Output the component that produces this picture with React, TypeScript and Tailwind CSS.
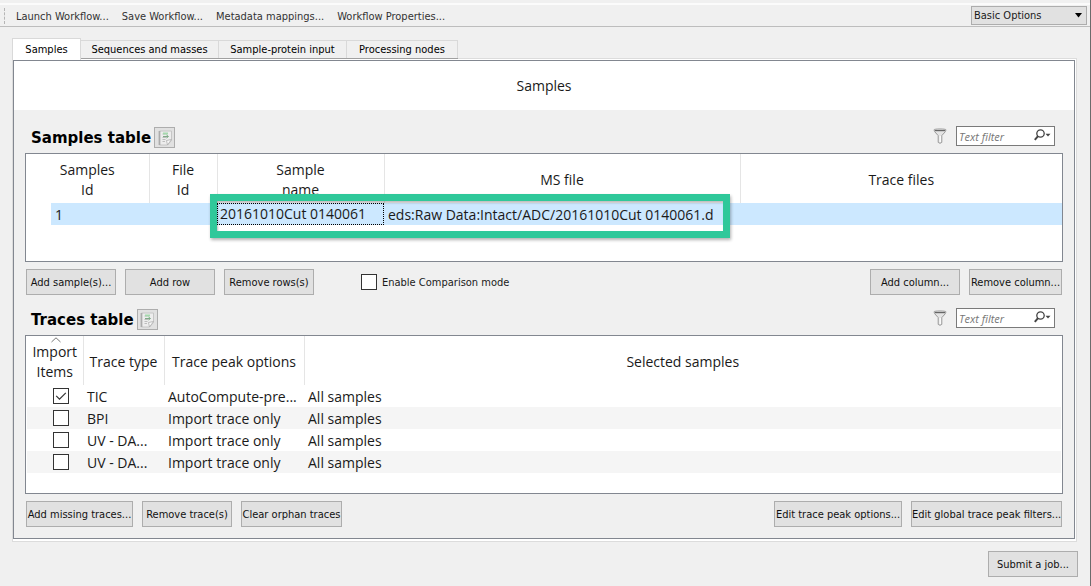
import type { ReactNode } from "react";

const buttonBase =
  "h-[26px] shrink-0 whitespace-nowrap border border-[#adadad] bg-[#e1e1e1] pt-[2px] text-center font-['DejaVu_Sans_Condensed','DejaVu_Sans',sans-serif] text-[11px] leading-4 text-[#111]";

function PushButton({ width, children }: { width: string; children: ReactNode }) {
  return (
    <button type="button" className={`${buttonBase} ${width}`}>
      {children}
    </button>
  );
}

function ExportIcon() {
  return (
    <svg width="16" height="16" viewBox="0 0 16 16" fill="none" aria-hidden="true">
      <path d="M2.5 1h12v9.5L10.5 15h-8z" fill="#ededed" stroke="#c6c6c6" />
      <path d="M14.5 9.5l-5 1 1 4.5z" fill="#fafafa" stroke="#adadad" strokeWidth="0.8" />
      <path d="M2.5 1.5v13" stroke="#8f8f8f" strokeWidth="2" strokeDasharray="1 1" />
      <path d="M5.5 4h3M5.5 7.5h4M5.5 9.5h3M5.5 11.5h2.5" stroke="#bdbdbd" />
      <path d="M6 3.5h5" stroke="#a5d8ad" strokeWidth="2" />
      <path d="M6 6.5h5M9.5 5l2 1.5-2 1.5" stroke="#7faa87" />
    </svg>
  );
}

function FunnelIcon() {
  return (
    <svg width="14" height="16" viewBox="0 0 14 16" fill="none" aria-hidden="true">
      <path
        d="M1 1.8C1 .7 13 .7 13 1.8L12.4 3.6 8.8 7.6V14.4L7 15.3 5.2 14.4V7.6L1.6 3.6z"
        fill="#e4e4e4"
        stroke="#9a9a9a"
      />
      <path d="M2 2.6h10" stroke="#666" strokeWidth="1.2" />
      <path d="M7.2 8v6" stroke="#fff" strokeWidth="1.2" />
    </svg>
  );
}

function SearchIcon() {
  return (
    <svg width="17" height="12" viewBox="0 0 17 12" fill="none" aria-hidden="true">
      <circle cx="6.5" cy="4.5" r="3.7" stroke="#444" strokeWidth="1.3" />
      <path d="M4 7.2L.8 10.8" stroke="#444" strokeWidth="2" />
      <path d="M11.5 4.8h5L14 7.4z" fill="#444" />
    </svg>
  );
}

function SectionHeader({ title }: { title: string }) {
  return (
    <div className="flex h-[22px] items-end">
      <h2 className="pl-[6px] font-['DejaVu_Sans',sans-serif] text-[15px] leading-5 font-bold text-black">
        {title}
      </h2>
      <button
        type="button"
        aria-label={`Export ${title}`}
        className="ml-[3px] flex size-[21px] items-center justify-center border border-[#adadad] bg-[#e1e1e1]"
      >
        <ExportIcon />
      </button>
      <div className="mr-2 ml-auto flex items-center gap-[9px] self-start">
        <FunnelIcon />
        <div className="relative h-5 w-[99px]">
          <input
            type="text"
            aria-label={`${title} filter`}
            placeholder="Text filter"
            className="block h-full w-full border border-[#7a7a7a] bg-white pr-6 pl-[2px] text-[11px] italic placeholder:text-[#777]"
          />
          <span className="pointer-events-none absolute top-[3px] right-1">
            <SearchIcon />
          </span>
        </div>
      </div>
    </div>
  );
}

function CheckBox({ id, label, checked }: { id: string; label?: string; checked?: boolean }) {
  return (
    <span className="relative block size-4 shrink-0">
      <input
        id={id}
        type="checkbox"
        aria-label={label}
        defaultChecked={checked}
        className="peer block size-4 appearance-none border border-[#333] bg-white"
      />
      <svg
        viewBox="0 0 16 16"
        fill="none"
        aria-hidden="true"
        className="pointer-events-none absolute inset-0 hidden size-4 peer-checked:block"
      >
        <path d="M3.2 7.8l3.3 3.3 6.3-6.3" stroke="#333" strokeWidth="1.2" />
      </svg>
    </span>
  );
}

const tabs = [
  { name: "Sequences and masses", width: "w-[138px]" },
  { name: "Sample-protein input", width: "w-[128px]" },
  { name: "Processing nodes", width: "w-[111px]" },
];

const traces = [
  { type: "TIC", options: "AutoCompute-pre...", samples: "All samples", checked: true },
  { type: "BPI", options: "Import trace only", samples: "All samples", checked: false },
  { type: "UV - DA...", options: "Import trace only", samples: "All samples", checked: false },
  { type: "UV - DA...", options: "Import trace only", samples: "All samples", checked: false },
];

const headCell = "border-r border-[#e5e5e5] p-0 pt-[2px] text-center font-normal";
const bodyCell = "overflow-hidden p-0 pt-px pl-1 whitespace-nowrap";

export default function App() {
  return (
    <div className="min-h-screen border-r border-[#6b6b6b] bg-[#f0f0f0] font-['Open_Sans','Noto_Sans',sans-serif] text-[#1a1a1a]">
      <div className="h-[3px]" />
      <header className="flex h-6 items-center border-t-2 border-b border-t-[#fbfbfb] border-b-[#bdbdbd] pr-[3px] pl-1 font-['DejaVu_Sans_Condensed','DejaVu_Sans',sans-serif] text-[11px] leading-4">
        <span className="h-4 w-px border-l border-dashed border-[#b5b5b5]" />
        <nav className="flex gap-[13px] pt-[2px] pl-[11px] text-[#333]">
          <button type="button">Launch Workflow...</button>
          <button type="button">Save Workflow...</button>
          <button type="button">Metadata mappings...</button>
          <button type="button">Workflow Properties...</button>
        </nav>
        <div className="relative ml-auto h-[19px] w-[116px]">
          <select
            aria-label="Option level"
            className="block h-full w-full appearance-none border border-[#adadad] bg-[#e1e1e1] pt-px pl-[2px] text-[11px] leading-4"
          >
            <option>Basic Options</option>
          </select>
          <svg
            width="7"
            height="5"
            viewBox="0 0 7 5"
            aria-hidden="true"
            className="pointer-events-none absolute top-[7px] right-[5px]"
          >
            <path d="M0 0h7L3.5 4.5z" fill="#000" />
          </svg>
        </div>
      </header>

      <main className="pt-[11px] pr-[13px] pl-3">
        <div
          role="tablist"
          className="flex items-end font-['DejaVu_Sans_Condensed','DejaVu_Sans',sans-serif] text-[11px] leading-4 text-black"
        >
          <button
            type="button"
            role="tab"
            aria-selected="true"
            className="relative z-10 -mb-[2px] h-[22px] w-[69px] border border-b-0 border-[#d9d9d9] bg-white"
          >
            Samples
          </button>
          {tabs.map((tab) => (
            <button
              key={tab.name}
              type="button"
              role="tab"
              aria-selected="false"
              className={`h-[18px] border-t border-r border-[#d9d9d9] pt-px whitespace-nowrap shadow-[0_1px_0_#a0a0a0] ${tab.width}`}
            >
              {tab.name}
            </button>
          ))}
        </div>

        <div className="border border-[#dcdcdc] bg-white pt-px pr-px pb-[2px]">
          <div className="border border-[#828790] bg-[#f0f0f0]">
            <h1 className="bg-white pt-[15px] pb-[14px] text-center text-[14px] leading-5">
              Samples
            </h1>

            <div className="px-[11px] pt-4 pb-[11px]">
              <SectionHeader title="Samples table" />

              <div className="relative mt-[5px] h-[109px] border border-[#828790] bg-white">
                <table className="w-full table-fixed border-collapse text-[14px] leading-5">
                  <colgroup>
                    <col className="w-[25px]" />
                    <col className="w-[98px]" />
                    <col className="w-[68px]" />
                    <col className="w-[167px]" />
                    <col className="w-[356px]" />
                    <col />
                  </colgroup>
                  <thead>
                    <tr className="h-[49px]">
                      <th colSpan={2} className={headCell}>
                        Samples
                        <br />
                        Id
                      </th>
                      <th className={headCell}>
                        File
                        <br />
                        Id
                      </th>
                      <th className={headCell}>
                        Sample
                        <br />
                        name
                      </th>
                      <th className={headCell}>MS file</th>
                      <th className="p-0 pt-[2px] text-center font-normal">Trace files</th>
                    </tr>
                  </thead>
                  <tbody>
                    <tr className="h-[22px]">
                      <td className="p-0" />
                      <td className={`bg-[#cce8ff] ${bodyCell}`}>1</td>
                      <td className="bg-[#cce8ff] p-0" />
                      <td className="bg-[#cce8ff] p-0">
                        <div className="h-[22px] border border-dotted border-black pl-[2px] leading-5 whitespace-nowrap">
                          20161010Cut 0140061
                        </div>
                      </td>
                      <td className={`bg-[#cce8ff] ${bodyCell}`}>
                        eds:Raw Data:Intact/ADC/20161010Cut 0140061.d
                      </td>
                      <td className="bg-[#cce8ff] p-0" />
                    </tr>
                  </tbody>
                </table>
                <div className="pointer-events-none absolute top-10 left-[184px] h-11 w-[520px] border-[7px] border-[#2fc89a] shadow-[1px_2px_3px_rgba(0,0,0,0.3),inset_1px_2px_2px_rgba(0,0,0,0.25)]" />
              </div>

              <div className="mt-[7px] flex items-center px-px">
                <div className="flex gap-[9px]">
                  <PushButton width="w-[90px]">Add sample(s)...</PushButton>
                  <PushButton width="w-[90px]">Add row</PushButton>
                  <PushButton width="w-[90px]">Remove rows(s)</PushButton>
                </div>
                <div className="ml-[47px] flex items-center gap-[5px]">
                  <CheckBox id="comparison" />
                  <label
                    htmlFor="comparison"
                    className="pt-px font-['DejaVu_Sans_Condensed','DejaVu_Sans',sans-serif] text-[11px] leading-4"
                  >
                    Enable Comparison mode
                  </label>
                </div>
                <div className="ml-auto flex gap-[9px]">
                  <PushButton width="w-[90px]">Add column...</PushButton>
                  <PushButton width="w-[93px]">Remove column...</PushButton>
                </div>
              </div>

              <div className="mt-[13px]">
                <SectionHeader title="Traces table" />
              </div>

              <div className="mt-[5px] h-[159px] border border-[#828790] bg-white px-px">
                <table className="w-full table-fixed border-collapse text-[14px] leading-5">
                  <colgroup>
                    <col className="w-[56px]" />
                    <col className="w-[81px]" />
                    <col className="w-[140px]" />
                    <col />
                  </colgroup>
                  <thead>
                    <tr className="h-[49px]">
                      <th className={`relative ${headCell}`}>
                        <svg
                          width="10"
                          height="6"
                          viewBox="0 0 10 6"
                          fill="none"
                          aria-hidden="true"
                          className="absolute top-[1px] left-6"
                        >
                          <path d="M.5 5L5 .8 9.5 5" stroke="#777" />
                        </svg>
                        Import
                        <br />
                        Items
                      </th>
                      <th className={headCell}>Trace type</th>
                      <th className={headCell}>Trace peak options</th>
                      <th className="p-0 pt-[2px] text-center font-normal">Selected samples</th>
                    </tr>
                  </thead>
                  <tbody>
                    {traces.map((trace, i) => (
                      <tr key={i} className="h-[22px] even:bg-[#f5f5f5]">
                        <td className="p-0 pl-[26px]">
                          <CheckBox
                            id={`trace-${i}`}
                            label={`Import ${trace.type}`}
                            checked={trace.checked}
                          />
                        </td>
                        <td className={bodyCell}>{trace.type}</td>
                        <td className={bodyCell}>{trace.options}</td>
                        <td className={bodyCell}>{trace.samples}</td>
                      </tr>
                    ))}
                  </tbody>
                </table>
              </div>

              <div className="mt-[7px] flex justify-between px-px">
                <div className="flex gap-[9px]">
                  <PushButton width="w-[107px]">Add missing traces...</PushButton>
                  <PushButton width="w-[90px]">Remove trace(s)</PushButton>
                  <PushButton width="w-[101px]">Clear orphan traces</PushButton>
                </div>
                <div className="flex gap-[9px]">
                  <PushButton width="w-[128px]">Edit trace peak options...</PushButton>
                  <PushButton width="w-[151px]">Edit global trace peak filters...</PushButton>
                </div>
              </div>
            </div>
          </div>
        </div>
      </main>

      <footer className="flex justify-end pt-[9px] pr-3">
        <PushButton width="w-[90px]">Submit a job...</PushButton>
      </footer>
    </div>
  );
}
